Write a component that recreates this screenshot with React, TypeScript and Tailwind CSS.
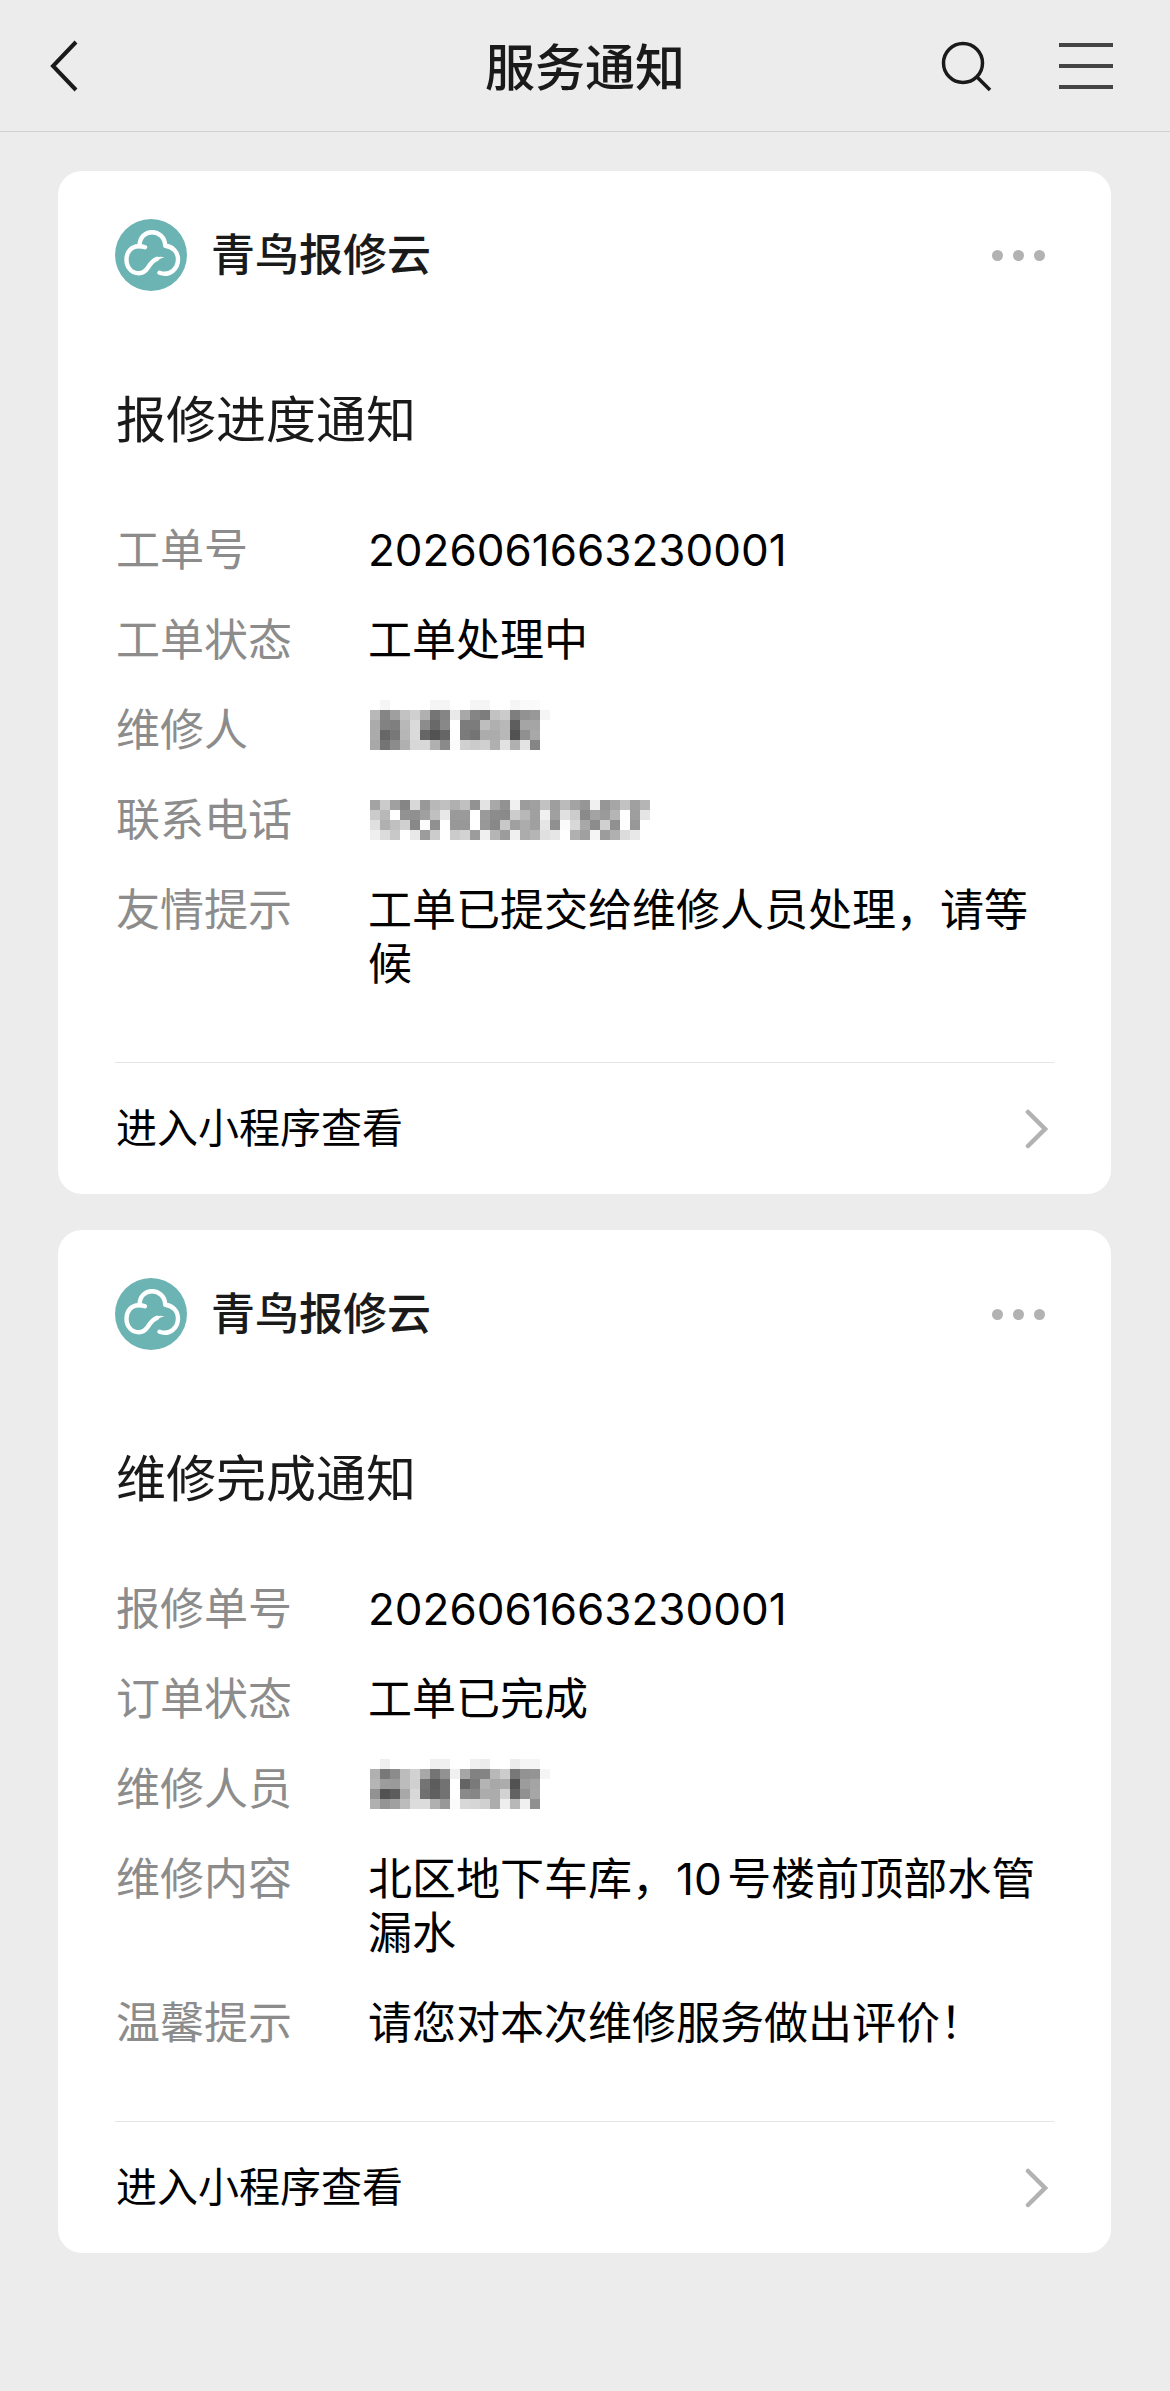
import { ReactNode } from "react";

// Each string is one line of a mosaic: two hex digits of grey per cell, ".." for an empty cell
const nameMosaicA = [
  "..f5........f5f5....f5f5....f5fafa",
  "b8859fc2d0b07585e9a8857dc2cb7e9298f5",
  "ab827fb8da8c6988..7c7cbeb0b85ea5a5",
  "ab6778b6da665266..7b74acacb85290a8",
  "a8748cb0d8d8b08afbd0cbd0b0e2b0e385",
];

const nameMosaicB = [
  "..ee........f0f0....f0ec....ecf5f5",
  "b0788cbcd2a87492f0a68284b8cc789294f5",
  "b59c9abcd0745c72..647ab4a8ac529ca4",
  "92525ca8d8706072..8a86acacd26290a6",
  "b094a0bcdcdcb098fbd8d6d0aceeb8f090",
];

const phoneMosaic = [
  "",
  "a3cba085d898b8c0b0c092e3a892f09ca0c29ebba396f096a6c2a0b5",
  "cbb8..9290a0c0e89a9a..9a8c8accb8a0f0a0e0cc8aa39ab5..9ee5",
  "e0b0c0d088fb90..9898..9888c8a0aca0e590fbd8a88cd090..98..",
  "efdcc8..e89ccc..cbd39cf0b59cf0acb5e0e6..b0a0f59cb0dce8..",
];

type Row = { label: string; value: ReactNode };

function Mosaic({ lines, label }: { lines: string[]; label: string }) {
  return (
    <svg
      role="img"
      aria-label={label}
      width="290"
      height="54"
      viewBox="-2 0 290 54"
      shapeRendering="crispEdges"
      className="block overflow-visible"
    >
      {lines.map((line, y) =>
        (line.match(/../g) ?? []).map((cell, x) =>
          cell === ".." ? null : (
            <rect key={`${x}-${y}`} x={x * 10} y={y * 10 - 3} width="10" height="10" fill={`#${cell}${cell}${cell}`} />
          )
        )
      )}
    </svg>
  );
}

function Logo() {
  return (
    <svg width="72" height="72" viewBox="0 0 72 72" fill="none" className="shrink-0">
      <circle cx="36" cy="36" r="36" fill="#6cb4b3" />
      <g stroke="#fff" strokeWidth="4.4" strokeLinecap="round" strokeLinejoin="round">
        <path d="M30 28.300C28 27.500 26 27.200 23.500 27.200C16.500 27.200 11.500 33 11.500 40.500C11.500 48.500 16.500 54.300 24 54.300C28.500 54.300 31 51.500 33 48.500C35.500 44.500 38 41 42 39.800" />
        <path d="M24.500 26.500C24.800 18.500 30 13.200 37 13.200C44 13.200 50 18.500 50.300 26.800C57.500 27.500 63 33 63 40.500C63 49.500 55 57.500 44.500 53.800" />
      </g>
      <path d="M38 40.500C41.500 37.800 45 37.300 49.500 38.400C46 39 43.500 40 40.500 43Z" fill="#fff" />
    </svg>
  );
}

function Card({ title, rows }: { title: string; rows: Row[] }) {
  return (
    <article className="rounded-3xl bg-white px-[57px] pt-12">
      <header className="flex items-center">
        <Logo />
        <h2 className="ml-6 text-[44px] leading-[54px] font-medium text-[#1a1a1a]">青鸟报修云</h2>
        <button type="button" aria-label="更多" className="ml-auto flex gap-[10px] py-4 pr-[9px]">
          <span className="size-[11px] rounded-full bg-[#b2b2b2]"></span>
          <span className="size-[11px] rounded-full bg-[#b2b2b2]"></span>
          <span className="size-[11px] rounded-full bg-[#b2b2b2]"></span>
        </button>
      </header>

      <h3 className="mt-[97px] pl-px text-[50px] leading-[64px] text-[#1a1a1a]">{title}</h3>

      <dl className="mt-[71px] flex flex-col gap-9 pl-px text-[44px] leading-[54px]">
        {rows.map((row) => (
          <div key={row.label} className="flex">
            <dt className="w-[252px] shrink-0 text-[#8c8c8c]">{row.label}</dt>
            <dd className="min-w-0 flex-1 text-black [text-autospace:normal]">{row.value}</dd>
          </div>
        ))}
      </dl>

      <a href="#" className="mt-[71px] flex h-[132px] items-center justify-between border-t border-[#e5e5e5] pl-px text-[41px] text-black">
        进入小程序查看
        <svg width="24" height="40" viewBox="0 0 24 40" fill="none" stroke="#b2b2b2" strokeWidth="4.5" strokeLinecap="round" className="mr-[6px]">
          <path d="M4 3L21 20L4 37" />
        </svg>
      </a>
    </article>
  );
}

export default function App() {
  return (
    <div className="min-h-screen bg-[#ececec] pb-[136px] font-[Inter,'Noto_Sans_CJK_SC',sans-serif]">
      <header className="grid h-[132px] grid-cols-[1fr_auto_1fr] items-center border-b border-[#d0d0d0] px-12">
        <button type="button" aria-label="返回" className="justify-self-start">
          <svg width="30" height="52" viewBox="0 0 30 52" fill="none" stroke="#1a1a1a" strokeWidth="4">
            <path d="M28 2L5 26L28 50" />
          </svg>
        </button>
        <h1 className="pt-1 text-[50px] leading-[64px] font-medium text-[#1a1a1a]">服务通知</h1>
        <div className="flex items-center justify-end gap-[67px] pr-[9px]">
          <button type="button" aria-label="搜索">
            <svg width="52" height="52" viewBox="0 0 52 52" fill="none" stroke="#1a1a1a" strokeWidth="3.5">
              <circle cx="23" cy="23" r="19.5" />
              <path d="M37 37L50 50" />
            </svg>
          </button>
          <button type="button" aria-label="菜单">
            <svg width="54" height="46" viewBox="0 0 54 46" fill="none" stroke="#444" strokeWidth="4">
              <path d="M0 2H54M0 23H54M0 44H54" />
            </svg>
          </button>
        </div>
      </header>

      <main className="flex flex-col gap-9 pt-[39px] pr-[59px] pl-[58px]">
        <Card
          title="报修进度通知"
          rows={[
            { label: "工单号", value: "2026061663230001" },
            { label: "工单状态", value: "工单处理中" },
            { label: "维修人", value: <Mosaic lines={nameMosaicA} label="已隐藏的姓名" /> },
            { label: "联系电话", value: <Mosaic lines={phoneMosaic} label="已隐藏的电话" /> },
            { label: "友情提示", value: "工单已提交给维修人员处理，请等候" },
          ]}
        />
        <Card
          title="维修完成通知"
          rows={[
            { label: "报修单号", value: "2026061663230001" },
            { label: "订单状态", value: "工单已完成" },
            { label: "维修人员", value: <Mosaic lines={nameMosaicB} label="已隐藏的姓名" /> },
            { label: "维修内容", value: "北区地下车库，10号楼前顶部水管漏水" },
            { label: "温馨提示", value: "请您对本次维修服务做出评价！" },
          ]}
        />
      </main>
    </div>
  );
}
